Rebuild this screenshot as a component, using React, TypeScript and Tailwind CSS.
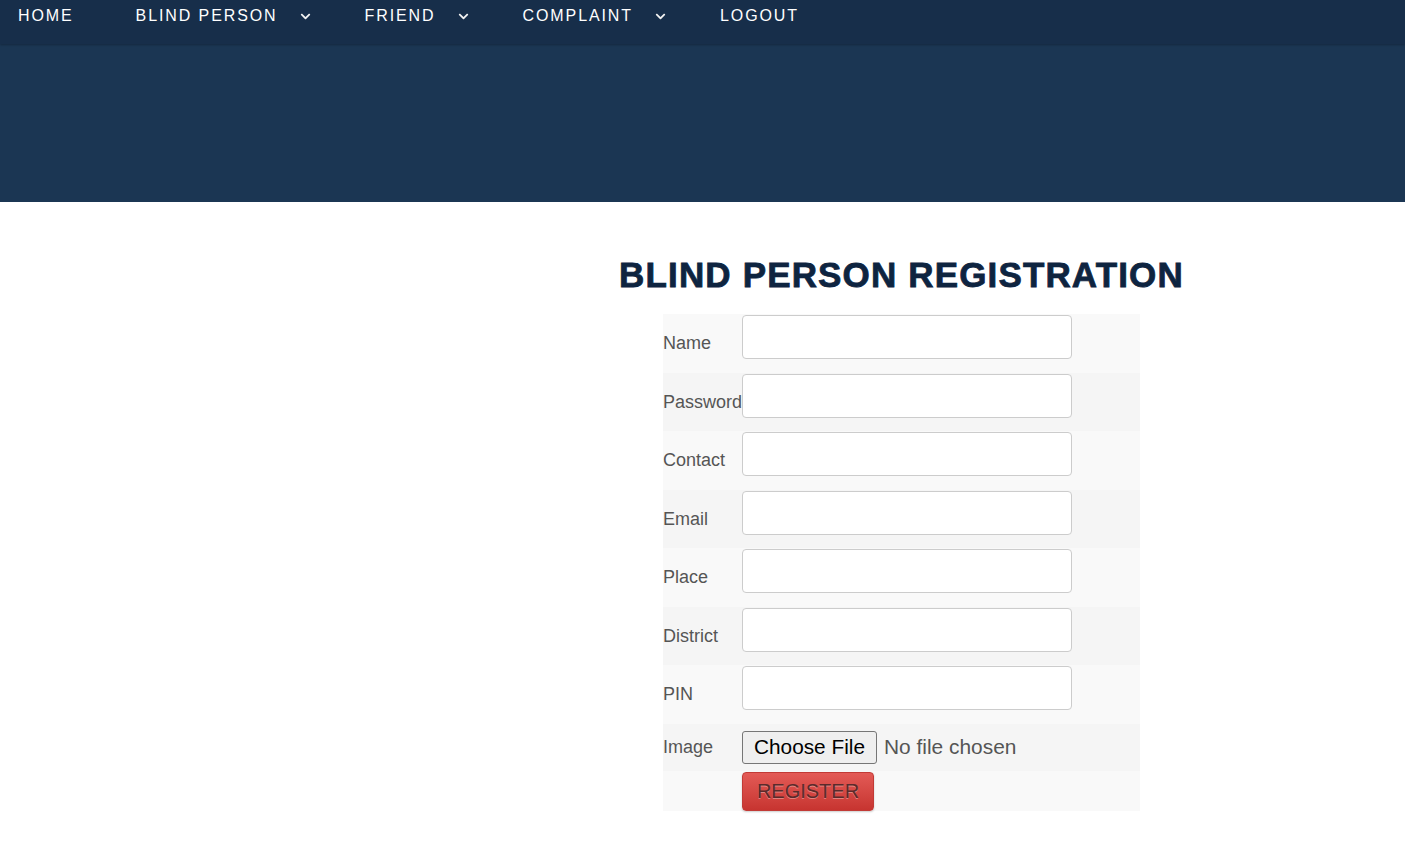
import { FaChevronDown } from "react-icons/fa";

const navItems = [
    { label: "HOME", dropdown: false },
    { label: "BLIND PERSON", dropdown: true },
    { label: "FRIEND", dropdown: true },
    { label: "COMPLAINT", dropdown: true },
    { label: "LOGOUT", dropdown: false },
];

const fields = ["Name", "Password", "Contact", "Email", "Place", "District", "PIN"];

const NavBar = () => (
    <nav className="h-[44px] bg-[#172e4a] shadow-[0_1px_2px_rgba(0,0,0,0.25)] relative z-10">
        <ul className="flex items-start pl-[18px] pt-[7px]">
            {navItems.map((item, i) => (
                <li
                    key={item.label}
                    className={`flex items-start ${i === 0 ? "mr-[62px]" : "mr-[54px]"}`}
                >
                    <a
                        href="#"
                        className="text-white text-[16px] leading-[18px] tracking-[1.9px]"
                    >
                        {item.label}
                    </a>
                    {item.dropdown && (
                        <FaChevronDown className="ml-[22px] mt-[4px] text-[#f2f2f2]" size={11} />
                    )}
                </li>
            ))}
        </ul>
    </nav>
);

export default function App() {
    return (
        <div className="min-h-screen bg-white font-['Liberation_Sans',Arial,sans-serif]">
            <NavBar />
            <div className="h-[158px] bg-[#1b3653]" />

            <div className="flex">
                <div className="w-[398px] shrink-0" />
                <main className="flex-1 flex flex-col items-center">
                    <h1 className="mt-[53px] text-[35px] leading-[40px] font-black tracking-[1.15px] text-[#0e2440] [-webkit-text-stroke:0.8px_#0e2440]">
                        BLIND PERSON REGISTRATION
                    </h1>

                    <form className="mt-[19px] w-[477px]" onSubmit={(e) => e.preventDefault()}>
                        {fields.map((field, i) => (
                            <div
                                key={field}
                                className={`flex h-[58.5px] ${i % 2 === 0 ? "bg-[#f9f9f9]" : "bg-[#f5f5f5]"}`}
                            >
                                <label className="w-[79px] shrink-0 self-center pt-px text-[18px] text-[#555] whitespace-nowrap">
                                    {field}
                                </label>
                                <div className="pt-px">
                                    <input
                                        type={field === "Password" ? "password" : "text"}
                                        className="w-[330px] h-[44px] bg-white border border-[#ccc] rounded-[4px] px-3 text-[18px] outline-none"
                                    />
                                </div>
                            </div>
                        ))}

                        <div className="flex items-center h-[47px] bg-[#f5f5f5]">
                            <label className="w-[79px] shrink-0 text-[18px] text-[#555]">Image</label>
                            <label className="flex items-center cursor-pointer">
                                <span className="h-[33px] px-[11px] flex items-center bg-[#efefef] border border-[#767676] rounded-[3px] text-[20.8px] text-black">
                                    Choose File
                                </span>
                                <span className="ml-[7px] text-[20.9px] text-[#555]">No file chosen</span>
                                <input type="file" className="hidden" />
                            </label>
                        </div>

                        <div className="h-[40px] bg-[#f9f9f9] pt-px pl-[79px]">
                            <button
                                type="submit"
                                className="w-[132px] h-[39px] rounded-[4px] border border-[#c23a36] bg-gradient-to-b from-[#e35a56] to-[#c73430] text-[20px] text-[#5a2b2b] [text-shadow:0_1px_0_rgba(255,255,255,0.35)] shadow-[0_1px_2px_rgba(0,0,0,0.2)]"
                            >
                                REGISTER
                            </button>
                        </div>
                    </form>
                </main>
            </div>
        </div>
    );
}
